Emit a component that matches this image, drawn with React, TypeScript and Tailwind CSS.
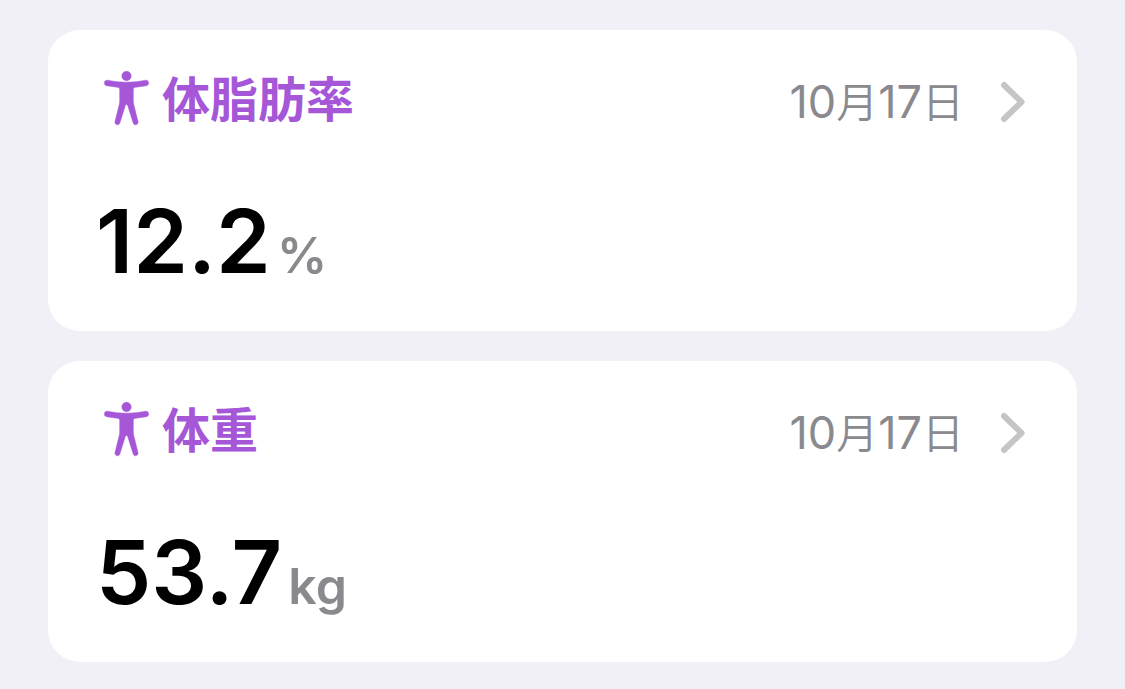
type Metric = {
  title: string;
  month: number;
  day: number;
  value: string;
  unit: string;
};

const metrics: Metric[] = [
  {
    title: "体脂肪率",
    month: 10,
    day: 17,
    value: "12.2",
    unit: "%",
  },
  {
    title: "体重",
    month: 10,
    day: 17,
    value: "53.7",
    unit: "kg",
  },
];

function BodyIcon() {
  return (
    <svg
      viewBox="0 0 46 56"
      className="mb-1 h-14 w-[46px] flex-none"
      fill="currentColor"
      stroke="currentColor"
      strokeWidth="0.5"
      aria-hidden="true"
    >
      <circle cx="22.5" cy="6" r="4.7" />
      <path d="M3.2 10.2C9.500 11.400 16 12.200 22.500 12.200s13-.8 19.300-2c3.200-.4 3.900 4.800.7 5.500L31.500 17.300c-1.600.3-2.200 1-2.200 2.400v10.800c0 1.500.2 2.800.5 4.200l4.200 16.900c.8 3.400-4 4.600-4.900 1.200L23.700 35.500c-.5-1.400-1.900-1.400-2.400 0l-5.400 17.300c-.9 3.400-5.700 2.200-4.900-1.200l4.200-16.900c.3-1.400.5-2.700.5-4.200V19.700c0-1.400-.6-2.100-2.200-2.400L2.500 15.700c-3.200-.7-2.500-5.900.7-5.500Z" />
    </svg>
  );
}

function Chevron() {
  return (
    <svg
      viewBox="0 0 26 42"
      className="h-[42px] w-[26px] flex-none text-[#c5c5c7]"
      fill="none"
      stroke="currentColor"
      strokeWidth="6"
      strokeLinecap="round"
      strokeLinejoin="round"
      aria-hidden="true"
    >
      <path d="M4 4l17.500 17L4 38" />
    </svg>
  );
}

function MetricCard({ title, month, day, value, unit }: Metric) {
  return (
    <a
      href="#"
      className="block rounded-[32px] bg-white pt-9 pr-[51px] pb-5 pl-12"
    >
      <div className="flex h-[72px] items-center justify-between">
        <h2 className="flex items-center gap-3 pb-1 pl-2 text-[48px] leading-[68px] font-bold text-[#a557d8]">
          <BodyIcon />
          {title}
        </h2>
        <div className="flex items-center gap-9 text-[45px] leading-[72px] text-[#8a8a8e]">
          <span>
            {month}
            <span className="text-[42px] font-[350]">月</span>
            {day}
            <span className="text-[42px] font-[350]">日</span>
          </span>
          <Chevron />
        </div>
      </div>
      <p className="mt-12 flex h-[125px] items-baseline gap-1.5 leading-[110px]">
        <span className="text-[88px] font-semibold text-black">{value}</span>
        <span className="text-[50px] font-semibold text-[#8a8a8e]">{unit}</span>
      </p>
    </a>
  );
}

export default function App() {
  return (
    <main
      lang="ja"
      className="flex min-h-screen flex-col gap-[30px] bg-[#f1f0f6] px-12 py-[30px] font-['Inter','Noto_Sans_CJK_JP',sans-serif]"
    >
      {metrics.map((metric) => (
        <MetricCard key={metric.title} {...metric} />
      ))}
    </main>
  );
}
